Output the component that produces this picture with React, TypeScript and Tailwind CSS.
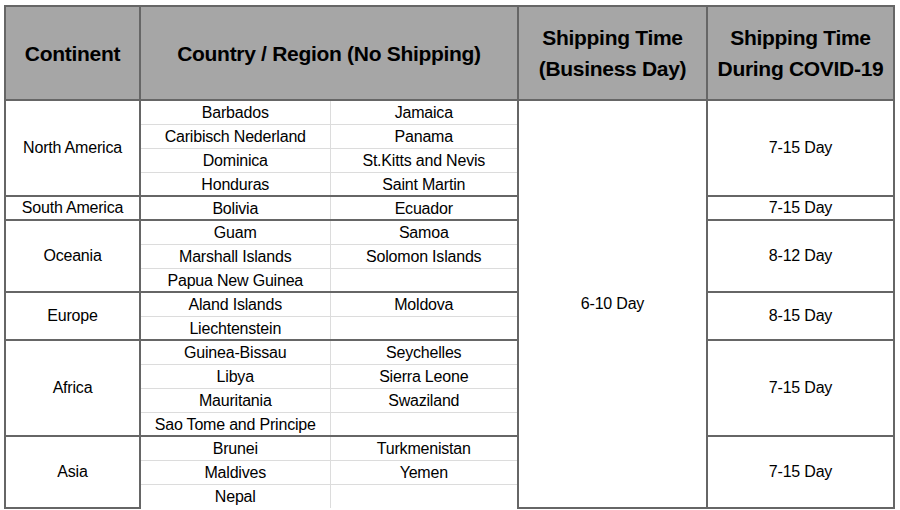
import React from 'react';

type Group = {
  continent: string;
  rows: [string, string][];
  covid: string;
};

const groups: Group[] = [
  {
    continent: 'North America',
    rows: [
      ['Barbados', 'Jamaica'],
      ['Caribisch Nederland', 'Panama'],
      ['Dominica', 'St.Kitts and Nevis'],
      ['Honduras', 'Saint Martin'],
    ],
    covid: '7-15 Day',
  },
  { continent: 'South America', rows: [['Bolivia', 'Ecuador']], covid: '7-15 Day' },
  {
    continent: 'Oceania',
    rows: [
      ['Guam', 'Samoa'],
      ['Marshall Islands', 'Solomon Islands'],
      ['Papua New Guinea', ''],
    ],
    covid: '8-12 Day',
  },
  {
    continent: 'Europe',
    rows: [
      ['Aland Islands', 'Moldova'],
      ['Liechtenstein', ''],
    ],
    covid: '8-15 Day',
  },
  {
    continent: 'Africa',
    rows: [
      ['Guinea-Bissau', 'Seychelles'],
      ['Libya', 'Sierra Leone'],
      ['Mauritania', 'Swaziland'],
      ['Sao Tome and Principe', ''],
    ],
    covid: '7-15 Day',
  },
  {
    continent: 'Asia',
    rows: [
      ['Brunei', 'Turkmenistan'],
      ['Maldives', 'Yemen'],
      ['Nepal', ''],
    ],
    covid: '7-15 Day',
  },
];

const totalRows = groups.reduce((n, g) => n + g.rows.length, 0);

const dark = 'border-2 border-[#666] p-0';
const th = `${dark} bg-[#a6a6a6] font-bold text-[21px] leading-[31px] tracking-[-0.3px] text-black text-center align-middle`;

export default function App() {
  return (
    <div className="bg-white w-[900px] h-[510px] pl-[4px] pt-[5px]" style={{ fontFamily: '"Liberation Sans", Arial, sans-serif' }}>
      <table className="table-fixed border-collapse w-[889px] text-black text-[16px] leading-[18px] tracking-[-0.2px]">
        <colgroup>
          <col className="w-[135px]" />
          <col className="w-[190px]" />
          <col className="w-[188px]" />
          <col className="w-[189px]" />
          <col className="w-[187px]" />
        </colgroup>
        <thead>
          <tr className="h-[94px]">
            <th className={th}>Continent</th>
            <th className={th} colSpan={2}>Country / Region (No Shipping)</th>
            <th className={th}>
              Shipping Time
              <br />
              (Business Day)
            </th>
            <th className={th}>
              Shipping Time
              <br />
              During COVID-19
            </th>
          </tr>
        </thead>
        <tbody>
          {groups.map((g, gi) =>
            g.rows.map((r, ri) => {
              const first = ri === 0;
              const cell = `h-[24px] p-0 pt-[2px] text-center align-middle border-x-0 border-[#dcdcdc] ${
                first ? 'border-t-2 border-t-[#666]' : 'border-t'
              }`;
              return (
                <tr key={`${gi}-${ri}`} className="h-[24px]">
                  {first && (
                    <td rowSpan={g.rows.length} className={`${dark} text-center align-middle`}>
                      {g.continent}
                    </td>
                  )}
                  <td className={`${cell} border-r`}>{r[0]}</td>
                  <td className={cell}>{r[1]}</td>
                  {gi === 0 && first && (
                    <td rowSpan={totalRows} className={`${dark} text-center align-middle`}>
                      6-10 Day
                    </td>
                  )}
                  {first && (
                    <td rowSpan={g.rows.length} className={`${dark} text-center align-middle`}>
                      {g.covid}
                    </td>
                  )}
                </tr>
              );
            })
          )}
        </tbody>
      </table>
    </div>
  );
}
